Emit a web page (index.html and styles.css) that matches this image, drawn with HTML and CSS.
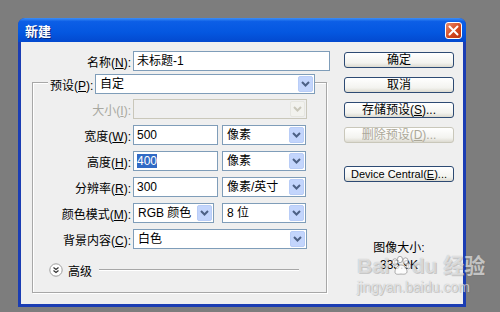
FILE: index.html
```html
<!DOCTYPE html>
<html lang="zh-CN">
<head>
    <meta charset="UTF-8">
    <title>新建</title>
    <link rel="stylesheet" href="styles.css">
</head>
<body>
    <div class="window">
        <div class="titlebar">
            <span class="title">新建</span>
            <span class="close">
                <svg width="11" height="11" viewBox="0 0 11 11"><path d="M1.5 1.5 L9.5 9.5 M9.5 1.5 L1.5 9.5" stroke="#fff" stroke-width="2" stroke-linecap="round"/></svg>
            </span>
        </div>

        <div class="client">
            <div class="main">
                <div class="row name-row">
                    <span class="lbl">名称(<u>N</u>):</span>
                    <div class="field w-name">未标题-1</div>
                </div>

                <div class="group">
                    <div class="group-head">
                        <span class="legend">预设(<u>P</u>):</span>
                        <div class="combo w-preset"><span class="val">自定</span><span class="drop"></span></div>
                    </div>

                    <div class="rows">
                        <div class="row">
                            <span class="lbl off">大小(<u>I</u>):</span>
                            <div class="combo disabled w-size"><span class="val"></span><span class="drop"></span></div>
                        </div>
                        <div class="row">
                            <span class="lbl">宽度(<u>W</u>):</span>
                            <div class="field w-num">500</div>
                            <div class="combo w-unit"><span class="val">像素</span><span class="drop"></span></div>
                        </div>
                        <div class="row">
                            <span class="lbl">高度(<u>H</u>):</span>
                            <div class="field w-num"><span class="selected">400</span></div>
                            <div class="combo w-unit"><span class="val">像素</span><span class="drop"></span></div>
                        </div>
                        <div class="row">
                            <span class="lbl">分辨率(<u>R</u>):</span>
                            <div class="field w-num">300</div>
                            <div class="combo w-unit"><span class="val">像素/英寸</span><span class="drop"></span></div>
                        </div>
                        <div class="row">
                            <span class="lbl">颜色模式(<u>M</u>):</span>
                            <div class="combo w-mode"><span class="val">RGB 颜色</span><span class="drop"></span></div>
                            <div class="combo w-unit"><span class="val">8 位</span><span class="drop"></span></div>
                        </div>
                        <div class="row">
                            <span class="lbl">背景内容(<u>C</u>):</span>
                            <div class="combo w-size"><span class="val">白色</span><span class="drop"></span></div>
                        </div>
                    </div>

                    <div class="advanced">
                        <svg width="14" height="14" viewBox="0 0 14 14">
                            <circle cx="7" cy="7" r="6.2" fill="#fff" stroke="#9c9c9c"/>
                            <path d="M4.5 4.5 L7 6.5 L9.5 4.5 M4.5 7.5 L7 9.5 L9.5 7.5" fill="none" stroke="#333" stroke-width="1.2"/>
                        </svg>
                        <span>高级</span>
                        <span class="rule"></span>
                    </div>
                </div>
            </div>

            <div class="side">
                <div class="btn">确定</div>
                <div class="btn">取消</div>
                <div class="btn">存储预设(<u>S</u>)...</div>
                <div class="btn off">删除预设(<u>D</u>)...</div>
                <div class="btn gap">Device Central(<u>E</u>)...</div>
                <div class="info">
                    <div>图像大小:</div>
                    <div>335.9K</div>
                </div>
            </div>
        </div>

        <div class="watermark">
            <div class="wm-big">Bai<svg width="22" height="20" viewBox="0 0 22 20"><g fill="rgba(255,255,255,0.8)" stroke="rgba(110,110,110,0.55)" stroke-width="1"><ellipse cx="5" cy="6" rx="2.6" ry="3.3"/><ellipse cx="10" cy="3.5" rx="2.6" ry="3.2"/><ellipse cx="15.5" cy="5" rx="2.6" ry="3.2"/><ellipse cx="18.5" cy="10" rx="2.3" ry="2.8"/><path d="M5 16 C5 11 9 9 11 9 C14 9 17 12 17 15.5 C17 18 14.5 18.5 11 18 C7.5 18.5 5 18.5 5 16 Z"/></g></svg>du 经验</div>
            <div class="wm-small">jingyan.baidu.com</div>
        </div>
    </div>
</body>
</html>
```

FILE: styles.css
```css
body {
    margin: 0;
    padding: 18px 0 0 18px;
    background: #7d7d7d;
    font-family: "Liberation Sans", "Noto Sans CJK SC", sans-serif;
    font-size: 12px;
    color: #000;
    height: 312px;
    box-sizing: border-box;
    overflow: hidden;
}

.window {
    position: relative;
    width: 448px;
    height: 289px;
    box-sizing: border-box;
    background: #1b3db3;
    border-radius: 7px 7px 0 0;
    padding: 0 3px 3px 3px;
}

.titlebar {
    height: 24px;
    margin: 0 -3px;
    border-radius: 7px 7px 0 0;
    background: linear-gradient(#3d8ef6 0%, #0c5ee6 15%, #0457e0 60%, #0349cf 100%);
    display: flex;
    align-items: center;
    justify-content: space-between;
    padding: 0 4px 0 7px;
}

.title {
    color: #fff;
    font-weight: bold;
    font-size: 13px;
    text-shadow: 1px 1px 0 #0a2a80;
}

.close {
    width: 17px;
    height: 17px;
    box-sizing: border-box;
    border: 1px solid #fff;
    border-radius: 3px;
    background: linear-gradient(135deg, #ea8b6c, #d2441c 60%, #b83412);
    display: flex;
    align-items: center;
    justify-content: center;
}

.client {
    height: 262px;
    background: #efefef;
    display: flex;
}

.main {
    width: 323px;
    padding-top: 9px;
}

.row {
    display: flex;
    align-items: center;
    height: 20px;
}

.lbl {
    width: 110px;
    text-align: right;
    margin-right: 2px;
    white-space: nowrap;
}

.lbl.off {
    color: #a8a8a0;
}

.field {
    height: 20px;
    box-sizing: border-box;
    border: 1px solid #7f9db9;
    background: #fff;
    padding: 0 3px;
    line-height: 18px;
    white-space: nowrap;
}

.selected {
    background: #316ac5;
    color: #fff;
}

.w-name { width: 197px; }
.w-num { width: 85px; margin-right: 4px; }
.w-unit { width: 84px; }
.w-mode { width: 81px; margin-right: 8px; }
.w-size { width: 174px; }
.w-preset { width: 220px; }

.combo {
    height: 20px;
    box-sizing: border-box;
    border: 1px solid #7f9db9;
    background: #fff;
    display: flex;
    align-items: stretch;
}

.combo .val {
    flex: 1;
    padding: 0 4px;
    line-height: 18px;
    white-space: nowrap;
}

.combo .drop {
    width: 15px;
    margin: 1px;
    box-sizing: border-box;
    border: 1px solid #b9cdf7;
    border-radius: 2px;
    background: #c3d5fc url("data:image/svg+xml,%3Csvg xmlns='http://www.w3.org/2000/svg' width='9' height='6'%3E%3Cpath d='M1 1 L4.5 4.5 L8 1' fill='none' stroke='%234d6185' stroke-width='2'/%3E%3C/svg%3E") center no-repeat;
}

.combo.disabled {
    border-color: #c9c7ba;
    background: #efefef;
}

.combo.disabled .drop {
    border-color: #e6e6e0;
    background: #f2f2ee url("data:image/svg+xml,%3Csvg xmlns='http://www.w3.org/2000/svg' width='9' height='6'%3E%3Cpath d='M1 1 L4.5 4.5 L8 1' fill='none' stroke='%23c9c7ba' stroke-width='2'/%3E%3C/svg%3E") center no-repeat;
}

.group {
    margin: 11px 0 0 11px;
    width: 295px;
    height: 211px;
    box-sizing: border-box;
    border: 1px solid #a7a7a7;
    box-shadow: inset 1px 1px 0 #fff, 1px 1px 0 #fff;
}

.group-head {
    display: flex;
    align-items: center;
    margin-top: -9px;
    padding-left: 15px;
    height: 20px;
}

.legend {
    width: 47px;
    box-sizing: border-box;
    padding-left: 2px;
    background: #efefef;
    white-space: nowrap;
}

.rows {
    margin-top: 5px;
    display: flex;
    flex-direction: column;
    gap: 6px;
}

.rows .lbl {
    width: 98px;
}

.advanced {
    display: flex;
    align-items: center;
    margin: 13px 0 0 16px;
    height: 16px;
    gap: 5px;
}

.advanced .rule {
    width: 200px;
    margin-left: 2px;
    border-top: 1px solid #a7a7a7;
    border-bottom: 1px solid #fff;
}

.side {
    width: 110px;
    margin-left: 0;
    padding-top: 10px;
    display: flex;
    flex-direction: column;
    gap: 9px;
}

.btn {
    height: 16px;
    box-sizing: border-box;
    border: 1px solid #2d4a73;
    border-radius: 3px;
    background: linear-gradient(#ffffff, #f3f3ef 70%, #dcdad0);
    text-align: center;
    line-height: 14px;
    white-space: nowrap;
}

.btn.off {
    border-color: #c9c7ba;
    color: #aca899;
}

.btn.gap {
    margin-top: 14px;
    font-size: 11px;
}

.info {
    margin-top: 49px;
    text-align: center;
    line-height: 17px;
}

.watermark {
    position: absolute;
    left: 339px;
    top: 236px;
    white-space: nowrap;
    color: rgba(255, 255, 255, 0.6);
    text-shadow: 0 0 1px rgba(90, 90, 90, 0.45), 1px 1px 0 rgba(120, 120, 120, 0.3);
    font-family: "Liberation Sans", "Noto Sans CJK SC", sans-serif;
    font-weight: bold;
}

.wm-big {
    font-size: 21px;
    line-height: 24px;
    display: flex;
    align-items: center;
}

.wm-small {
    font-size: 14px;
    font-weight: normal;
    margin-top: 1px;
}
```
